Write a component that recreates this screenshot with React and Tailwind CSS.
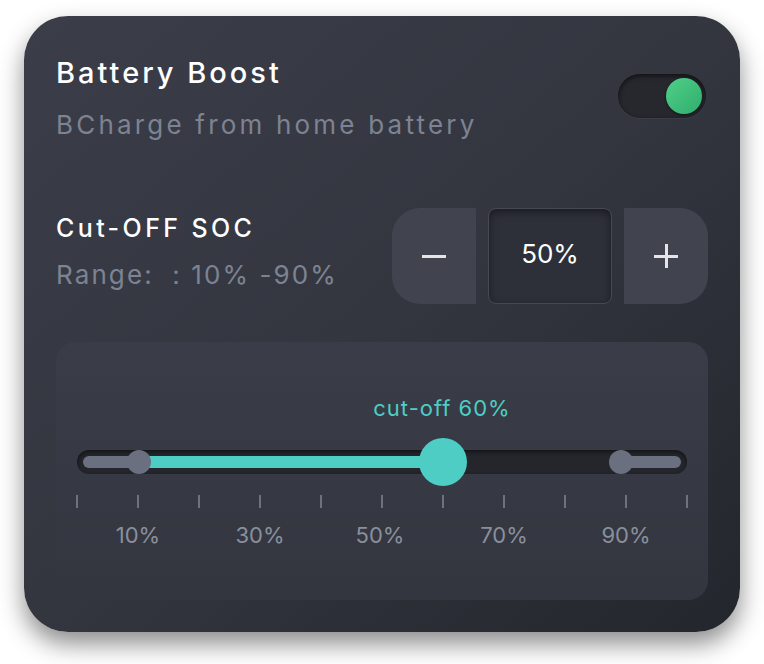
import React from "react";

const font = { fontFamily: "Inter, 'Noto Sans', sans-serif" };

export default function App() {
  const ticks = Array.from({ length: 11 });
  const labels = [
    { t: "10%", x: 138 },
    { t: "30%", x: 260 },
    { t: "50%", x: 380 },
    { t: "70%", x: 504 },
    { t: "90%", x: 626 },
  ];
  return (
    <div className="w-[764px] h-[664px] bg-white pt-[16px] pl-[24px]" style={font}>
      <div className="w-[716px] h-[616px] rounded-[44px] bg-gradient-to-br from-[#3b3e49] via-[#33363f] to-[#23262c] shadow-[0_12px_24px_rgba(0,0,0,0.45)] px-[32px] pt-[40px] flex flex-col">
        <div className="flex justify-between">
          <div className="flex flex-col">
            <div className="text-[29px] leading-[34px] font-medium text-white tracking-[3px]">Battery Boost</div>
            <div className="text-[26px] leading-[30px] mt-[20px] text-[#7d8391] tracking-[3.2px]">BCharge from home battery</div>
          </div>
          <div className="mt-[18px] mr-[2px] w-[88px] h-[44px] rounded-full bg-[#26282e] shadow-[inset_0_2px_5px_rgba(0,0,0,0.6),0_1px_1px_rgba(255,255,255,0.05)] flex items-center justify-end pr-[4px]">
            <div className="w-[36px] h-[36px] rounded-full bg-gradient-to-br from-[#4fd08a] to-[#2fae6c] shadow-[0_1px_3px_rgba(0,0,0,0.5)]" />
          </div>
        </div>

        <div className="flex justify-between mt-[68px]">
          <div className="flex flex-col pt-[5px]">
            <div className="text-[25px] leading-[30px] font-medium text-white tracking-[3.4px]">Cut-OFF SOC</div>
            <div className="text-[26px] leading-[30px] mt-[17px] text-[#7d8391] tracking-[2.1px]">Range: ：10% -90%</div>
          </div>
          <div className="flex gap-[12px] h-[96px]">
            <div className="w-[84px] h-[96px] rounded-l-[28px] bg-[#41444f] flex items-center justify-center">
              <div className="w-[24px] h-[3px] bg-[#e4e4e6]" />
            </div>
            <div className="w-[124px] h-[96px] rounded-[8px] bg-[#2e3039] border border-[#464954] shadow-[inset_0_3px_8px_rgba(0,0,0,0.45)] flex items-center justify-center text-[26px] leading-[30px] pb-[4px] text-white">
              50%
            </div>
            <div className="w-[84px] h-[96px] rounded-r-[28px] bg-[#41444f] flex items-center justify-center relative">
              <div className="w-[24px] h-[3px] bg-[#e4e4e6]" />
              <div className="absolute w-[3px] h-[24px] bg-[#e4e4e6]" />
            </div>
          </div>
        </div>

        <div className="mt-[38px] w-[652px] h-[258px] rounded-[20px] bg-gradient-to-b from-[#3a3d48] to-[#33363f] px-[20px] pt-[54px] flex flex-col">
          <div className="text-[22px] leading-[24px] text-[#4ecdc4] text-center pl-[120px] tracking-[1px]">cut-off 60%</div>
          <div className="relative mt-[30px] h-[24px]">
            <div className="absolute left-[1px] right-[1px] top-0 h-[24px] rounded-full bg-[#24262c] shadow-[inset_0_2px_4px_rgba(0,0,0,0.5)]" />
            <div className="absolute left-[7px] right-[7px] top-[6px] h-[12px] rounded-full bg-[#6b7080]" />
            <div className="absolute left-[363px] right-[63px] top-[6px] h-[12px] bg-[#24262c]" />
            <div className="absolute left-[63px] w-[304px] top-[6px] h-[12px] bg-[#4ecdc4]" />
            <div className="absolute left-[51px] top-0 w-[24px] h-[24px] rounded-full bg-[#6b7080]" />
            <div className="absolute left-[533px] top-0 w-[24px] h-[24px] rounded-full bg-[#6b7080]" />
            <div className="absolute left-[343px] top-[-12px] w-[48px] h-[48px] rounded-full bg-[#4ecdc4]" />
          </div>
          <div className="mt-[21px] flex justify-between px-[0px] h-[13px]">
            {ticks.map((_, i) => (
              <div key={i} className="w-[1.5px] h-[13px] bg-[#6d7281]" />
            ))}
          </div>
          <div className="relative mt-[15px] h-[24px] text-[22px] leading-[24px] text-[#8a8f9c]">
            {labels.map((l) => (
              <div key={l.t} className="absolute top-0 w-[80px] text-center" style={{ left: l.x - 76 - 40 }}>
                {l.t}
              </div>
            ))}
          </div>
        </div>
      </div>
    </div>
  );
}
